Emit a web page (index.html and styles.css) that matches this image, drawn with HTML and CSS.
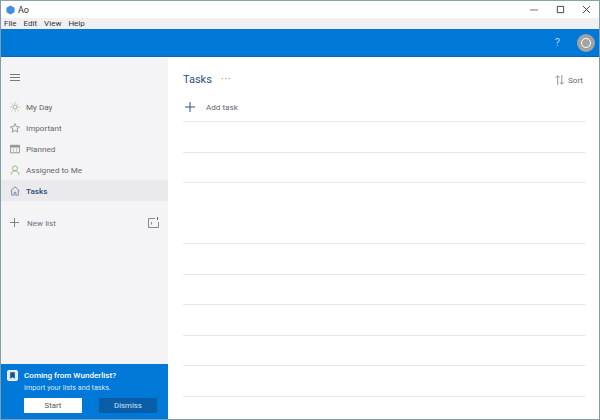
FILE: index.html
```html
<!DOCTYPE html>
<html lang="en">
<head>
<meta charset="utf-8">
<title>Ao</title>
<link rel="stylesheet" href="styles.css">
</head>
<body>
<div class="window">
  <header class="titlebar">
    <div class="app-title">
      <svg class="app-icon" viewBox="0 0 10 10"><path d="M5 0 9.500 2.500V7.500L5 10 .5 7.500V2.500Z" fill="#3f8ee0"/></svg>
      <span>Ao</span>
    </div>
    <div class="win-controls">
      <svg viewBox="0 0 10 10"><path d="M0 5.500H9" stroke="#666" fill="none"/></svg>
      <svg viewBox="0 0 10 10"><path d="M1.500 1.500H8.500V8.500H1.500Z" stroke="#333" fill="none"/></svg>
      <svg viewBox="0 0 10 10"><path d="M1 1 9 9M9 1 1 9" stroke="#333" fill="none"/></svg>
    </div>
  </header>
  <nav class="menubar"><span>File</span><span>Edit</span><span>View</span><span>Help</span></nav>
  <div class="bluebar">
    <span class="help">?</span>
    <div class="avatar"><span class="avatar-ring"></span></div>
  </div>
  <div class="main">
    <aside class="sidebar">
      <div class="hamburger">
        <svg viewBox="0 0 10 8" width="10" height="8"><path d="M0 .5H10M0 3.500H10M0 6.500H10" stroke="#777" fill="none"/></svg>
      </div>
      <ul class="lists">
        <li class="item">
          <svg class="ico" viewBox="0 0 12 12"><circle cx="6" cy="6" r="2.400" fill="none" stroke="#a3a383"/><path d="M6 .5V2M6 10V11.500M.5 6H2M10 6H11.500M2 2 3 3M9 9 10 10M10 2 9 3M3 9 2 10" stroke="#a3a383" fill="none"/></svg>
          <span>My Day</span>
        </li>
        <li class="item">
          <svg class="ico" viewBox="0 0 12 12"><path d="M6 .8 7.500 4.400 11.400 4.700 8.400 7.200 9.400 11 6 9 2.600 11 3.600 7.200.6 4.700 4.500 4.400Z" fill="none" stroke="#888"/></svg>
          <span>Important</span>
        </li>
        <li class="item">
          <svg class="ico" viewBox="0 0 12 12"><path d="M.5 1.500H11.500V10.500H.5Z" fill="none" stroke="#888"/><path d="M.5 3H11.500" stroke="#888" stroke-width="2"/><path d="M4 4V10M8 4V10" stroke="#bbb"/></svg>
          <span>Planned</span>
        </li>
        <li class="item">
          <svg class="ico" viewBox="0 0 12 12"><circle cx="6" cy="4" r="3" fill="none" stroke="#7fb36c"/><path d="M1 11.500C1.500 8.500 3.500 7 6 7S10.500 8.500 11 11.500" fill="none" stroke="#7fb36c"/></svg>
          <span>Assigned to Me</span>
        </li>
        <li class="item active">
          <svg class="ico" viewBox="0 0 12 12"><path d="M.8 5.800 6 1 11.200 5.800M2 5V11H5V7.500H7V11H10V5" fill="none" stroke="#6a7fa4"/></svg>
          <span>Tasks</span>
        </li>
      </ul>
      <div class="newlist">
        <svg class="plus-small" viewBox="0 0 10 10"><path d="M5 0V10M0 5H10" stroke="#777" fill="none"/></svg>
        <span class="newlist-label">New list</span>
        <svg class="group-ico" viewBox="0 0 11 11"><path d="M7 1.500H.5V10.500H10.500V5M3.500 5V7.500" stroke="#888" fill="none"/><path d="M9.500 0V3" stroke="#666" fill="none"/></svg>
      </div>
      <section class="banner">
        <div class="banner-head">
          <svg class="banner-ico" viewBox="0 0 12 12"><rect x=".5" y=".5" width="11" height="11" rx="1.500" fill="#dcebf8" stroke="#fff"/><path d="M3.500 2.500H8.500V9.500L6 8 3.500 9.500Z" fill="#1d4f86"/></svg>
          <div>
            <h3>Coming from Wunderlist?</h3>
            <p>Import your lists and tasks.</p>
          </div>
        </div>
        <div class="banner-actions">
          <button class="btn btn-start">Start</button>
          <button class="btn btn-dismiss">Dismiss</button>
        </div>
      </section>
    </aside>
    <main class="content">
      <div class="toolbar">
        <h1>Tasks</h1>
        <span class="more">···</span>
        <div class="sort">
          <svg viewBox="0 0 10 11" width="9" height="10"><path d="M3 11V1M.8 3 3 .8 5.200 3M7.500 0V10M5.300 8 7.500 10.200 9.700 8" stroke="#888" fill="none"/></svg>
          <span>Sort</span>
        </div>
      </div>
      <div class="addtask">
        <svg class="plus" viewBox="0 0 10 10"><path d="M5 0V10M0 5H10" stroke="#2a5384" fill="none"/></svg>
        <span>Add task</span>
      </div>
      <div class="rows">
        <div class="row"></div>
        <div class="row"></div>
        <div class="row"></div>
        <div class="row blank"></div>
        <div class="row"></div>
        <div class="row"></div>
        <div class="row"></div>
        <div class="row"></div>
        <div class="row"></div>
        <div class="row"></div>
      </div>
    </main>
  </div>
</div>
</body>
</html>
```
FILE: styles.css
```css
* { box-sizing: border-box; }
html, body { margin: 0; padding: 0; }
body { width: 600px; height: 420px; overflow: hidden; font-family: Roboto, "Liberation Sans", sans-serif; background: #fff; }
ul { list-style: none; margin: 0; padding: 0; }
h1, h3, p { margin: 0; font-weight: 400; }

.window { width: 600px; height: 420px; display: flex; flex-direction: column; border: 1px solid #7f9fa8; border-top-color: #8aa3aa; }

.titlebar { height: 17px; flex: none; display: flex; justify-content: space-between; align-items: center; background: #fff; }
.app-title { display: flex; align-items: center; gap: 3px; padding-left: 5px; font-size: 9px; color: #333; }
.app-icon { width: 9px; height: 10px; }
.win-controls { display: flex; gap: 17px; padding-right: 8px; }
.win-controls svg { width: 9px; height: 9px; }

.menubar { height: 11px; flex: none; display: flex; gap: 7px; align-items: center; padding-left: 3px; background: #f0eff3; font-size: 8px; color: #333; }

.bluebar { height: 28px; flex: none; display: flex; align-items: center; justify-content: flex-end; background: #0078d7; border-bottom: 1px solid #0a66b4; padding-right: 4px; gap: 17px; }
.help { font-size: 11px; color: #a8d8f8; }
.avatar { width: 18px; height: 18px; border-radius: 50%; background: #a3a3a3; display: flex; justify-content: center; padding-top: 4px; margin-top: 1px; }
.avatar-ring { width: 10px; height: 10px; border-radius: 50%; border: 1px solid #fff; }

.main { flex: 1; display: flex; min-height: 0; }

.sidebar { width: 167px; flex: none; display: flex; flex-direction: column; background: #f4f3f6; }
.hamburger { height: 39px; flex: none; padding: 17px 0 0 9px; }
.hamburger svg { display: block; }

.item { height: 21px; display: flex; align-items: center; padding-left: 9px; gap: 6px; font-size: 8.100px; color: #666; }
.item .ico { width: 10px; height: 10px; flex: none; }
.item.active { background: #eaeaec; color: #2a4f80; font-weight: 500; }

.newlist { height: 21px; margin-top: 11px; display: flex; align-items: center; padding: 0 9px; font-size: 8.100px; color: #6a7484; }
.plus-small { width: 9px; height: 9px; flex: none; }
.newlist-label { margin-left: 8px; flex: 1; }
.group-ico { width: 11px; height: 11px; }

.banner { margin-top: auto; height: 55px; flex: none; background: #0078d7; padding: 5px 11px 0 6px; color: #fff; }
.banner-head { display: flex; gap: 6px; }
.banner-ico { width: 11px; height: 11px; flex: none; margin-top: 1px; }
.banner h3 { font-size: 8.100px; line-height: 12px; font-weight: 500; }
.banner p { font-size: 7.200px; line-height: 11px; margin-top: 1px; color: #d5e8f7; }
.banner-actions { display: flex; justify-content: space-between; margin: 5px 0 0 17px; }
.btn { width: 58px; height: 15px; padding: 0; border: 0; font-family: inherit; font-size: 7.800px; }
.btn-start { background: #fff; color: #555; }
.btn-dismiss { background: #0a5ea8; color: #cfe3f4; }

.content { flex: 1; min-width: 0; padding: 0 13px 0 15px; background: #fff; }
.toolbar { height: 39px; display: flex; align-items: center; padding-top: 6px; }
.toolbar h1 { font-size: 11px; color: #2a4f80; font-weight: 400; }
.more { margin-left: 9px; font-size: 10px; color: #777; letter-spacing: 1px; }
.sort { margin-left: auto; margin-right: 3px; display: flex; align-items: center; gap: 4px; font-size: 8.100px; color: #666; }
.addtask { height: 25px; display: flex; align-items: center; padding: 0 0 3px 2px; gap: 11px; font-size: 8.100px; color: #667; }
.plus { width: 10px; height: 10px; flex: none; }

.rows { display: flex; flex-direction: column; }
.row { height: 30.500px; flex: none; border-bottom: 1px solid #e8e8e8; }
.row:first-child { height: 1px; }
.row.blank { border-bottom-color: transparent; }
```
